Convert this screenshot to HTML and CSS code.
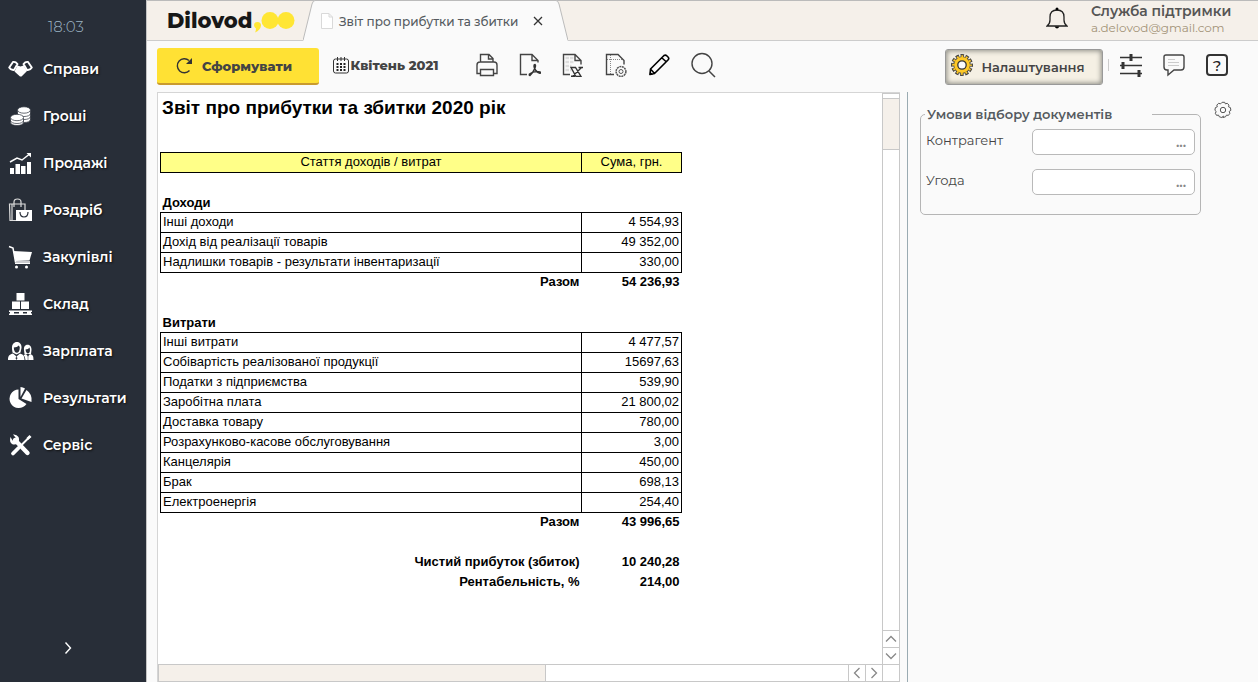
FILE: index.html
```html
<!DOCTYPE html>
<html lang="uk">
<head>
<meta charset="utf-8">
<title>Dilovod</title>
<link rel="stylesheet" href="styles.css">
</head>
<body>
<aside class="sidebar">
  <time class="clock">18:03</time>
  <nav class="menu">
    <a href="#"><svg width="26" height="24" viewBox="0 0 26 24"><path d="M1.200 10.500 5 5q2.500-.5 4.500 2L6 13Q3 13.500 1.200 10.500ZM23.800 10.500 20 5q-2.500-.5-4.500 2L19 13q3 .5 4.800-2.500Z" fill="none" stroke="#fff" stroke-width="1.900" stroke-linejoin="round"/><path d="M9.500 8.500 12.500 9.500 15.500 8.500 19 14 13.500 19.500 12 19.500 6.500 14.500Z" fill="#fff"/></svg>Справи</a>
    <a href="#"><svg width="26" height="24" viewBox="0 0 26 24"><g fill="#fff" stroke="#282e38" stroke-width=".7"><path d="M9.500 6v10c0 4 13 4 13 0V6"/><path d="M9.500 9.500c0 4 13 4 13 0M9.500 12.500c0 4 13 4 13 0M9.500 15.500c0 4 13 4 13 0" fill="none"/><ellipse cx="16" cy="6" rx="6.500" ry="3.200"/><path d="M2.500 14v4.500c0 4 13 4 13 0V14"/><path d="M2.500 16.500c0 4 13 4 13 0" fill="none"/><ellipse cx="9" cy="13.500" rx="6.500" ry="3.200"/></g></svg>Гроші</a>
    <a href="#"><svg width="26" height="24" viewBox="0 0 26 24"><path d="M2 17h4v6H2zM7.500 13h4.500v10H7.500zM13 15h4.500v8H13zM19 11h4v12h-4zM18.500 2H23v4.500z" fill="#fff"/><path d="M2 11 9 7l5 2 7-5.500" fill="none" stroke="#fff" stroke-width="1.500"/></svg>Продажі</a>
    <a href="#"><svg width="26" height="24" viewBox="0 0 26 24"><g fill="none" stroke="#ddd" stroke-width="1.200"><path d="M8 22.500H2L1.500 6h15.500v6M6 9V4q0-3 3.500-3T13 4v5M4 6v16"/></g><path d="M8 12h16v11H8z" fill="#fff"/><path d="M12 14q0 5 4 5t4-5" fill="none" stroke="#282e38" stroke-width="1.200"/></svg>Роздріб</a>
    <a href="#"><svg width="26" height="24" viewBox="0 0 26 24"><path d="M1 1.500 5 3 7.500 17H22" fill="none" stroke="#fff" stroke-width="1.500"/><path d="M5.500 6 24 7 21.500 15.500 7.500 16Z" fill="#fff"/><path d="M7 18.500h15" stroke="#fff"/><circle cx="8.500" cy="22" r="1.500" fill="#fff"/><circle cx="18.500" cy="22" r="1.500" fill="#fff"/></svg>Закупівлі</a>
    <a href="#"><svg width="26" height="24" viewBox="0 0 26 24"><path d="M8.500 1h8v7.500h-8zM4 9.500h8V17H4zM13 9.500h8V17h-8zM1 18.500h23V20H1zM1 21.500h23V23H1zM2 20h4v2H2zM11 20h4v2h-4zM19 20h4v2h-4z" fill="#fff"/></svg>Склад</a>
    <a href="#"><svg width="26" height="24" viewBox="0 0 26 24"><path d="M4 10c-1-9 10-9 9.500-1l-1 4.500-4 2-4-2Z" fill="#fff"/><path d="M5.800 8.500c2 0 4-1 5-2q1 1.500 1 2c0 7-6 7-6 0Z" fill="#282e38"/><path d="M0 21c0-5 2-5.500 5-6.500l3.500 3 3.500-3c3 1 4.500 2 4.500 6.500ZM16 11c-1-7 8-7 7.500 0l-.5 4h-6.500Z" fill="#fff"/><path d="M17.500 10.500q3 0 4-2c2 7-3.500 8-4 2Z" fill="#282e38"/><path d="M17.500 21q0-3-2-5l2.500-1 2 2.500 2-2.500c3 1 3.500 2 3.500 6Z" fill="#fff"/><path d="m8.500 17.500.6 2-.6 1-.6-1ZM20 17v4" stroke="#282e38" fill="#282e38" stroke-width=".5"/></svg>Зарплата</a>
    <a href="#"><svg width="26" height="24" viewBox="0 0 26 24"><path d="M10.500 3.500A9.300 9.300 0 1 0 18.500 18L10.500 13Z" fill="#fff"/><path d="M12.500 1q2.500 0 4.500 1.500L12.500 11Z" fill="#fff"/><path d="M18.500 4q6 4 5 12L13.500 12.500Z" fill="#fff"/></svg>Результати</a>
    <a href="#"><svg width="26" height="24" viewBox="0 0 26 24"><path d="M7 7 19.500 20" stroke="#fff" stroke-width="4.400" stroke-linecap="round"/><path d="M2.500 4q-1.500 5 1.500 7 3 1.500 5.500-1t1-6q-2-3-5.500-2.500l2.500 3-.5 2.500-2.500.5Z" fill="#fff"/><path d="M11 14.500 22 3.500" stroke="#fff" stroke-width="2"/><path d="m5 20.500 5.500-5.500" stroke="#fff" stroke-width="3.800" stroke-linecap="round"/><path d="m18.500 5 3-3L23.500 4 20 7Z" fill="#fff"/></svg>Сервіс</a>
  </nav>
  <button class="expand" aria-label="Розгорнути"><svg width="8" height="14" viewBox="0 0 8 14"><path d="m1.500 1.500 5 5.500-5 5.500" fill="none" stroke="#fff" stroke-width="1.400"/></svg></button>
</aside>
<main class="main">
  <header class="header">
    <a class="logo" href="#"><span>Dilovod</span><svg width="42" height="24" viewBox="0 0 42 24"><g fill="#ffe634"><circle cx="17" cy="11.500" r="8.500"/><circle cx="33" cy="11.500" r="8.500"/><path d="M1 16q0-3 3.500-3T8 16.500Q7.500 21 2 23.500q1-2 1-4-2-1-2-3.500Z"/></g></svg></a>
    <div class="tab">
      <svg class="slant" width="12" height="41" viewBox="0 0 12 41"><path d="M0 41V40.500L9 4Q10 .5 12 .5V41Z" fill="#fafafa"/><path d="M0 40.500 9 4Q10 .5 12 .5" fill="none" stroke="#bbb"/></svg>
      <div class="tab-body">
        <svg width="12" height="16" viewBox="0 0 12 16"><path d="M.5.500h7.500l3.500 3.500v11.500H.5ZM8 .5V4h3.500" fill="#fff" stroke="#d9d9d9"/></svg>
        <span>Звіт про прибутки та збитки</span>
        <button aria-label="Закрити"><svg width="10" height="10" viewBox="0 0 10 10"><path d="m1 1 8 8M9 1 1 9" stroke="#333" stroke-width="1.300"/></svg></button>
      </div>
      <svg class="slant" width="12" height="41" viewBox="0 0 12 41"><path d="M12 41V40.500L3 4Q2 .5 0 .5V41Z" fill="#fafafa"/><path d="M12 40.500 3 4Q2 .5 0 .5" fill="none" stroke="#bbb"/></svg>
    </div>
    <div class="account">
      <button aria-label="Сповіщення"><svg width="22" height="24" viewBox="0 0 22 24"><path d="M1 19q3-2 3-6v-3q0-7 7-7t7 7v3q0 4 3 6Z" fill="none" stroke="#222" stroke-width="1.300"/><circle cx="11" cy="2" r="1.500"/><path d="M8.500 19.500q2.500 4 5 0Z"/></svg></button>
      <div class="user"><strong>Служба підтримки</strong><a href="#">a.delovod@gmail.com</a></div>
    </div>
  </header>
  <div class="toolbar">
    <button class="generate"><svg width="18" height="18" viewBox="0 0 18 18"><path d="M14.500 13.500a7 7 0 1 1-.5-10" fill="none" stroke="#333" stroke-width="1.400"/><path d="M17 1v6h-6Z" fill="#333"/></svg>Сформувати</button>
    <button class="period"><svg width="16" height="17" viewBox="0 0 16 17"><rect x=".5" y="2" width="15" height="14" rx="2" fill="none" stroke="#333"/><path d="M4.500 0v4M8 0v4M11.500 0v4" stroke="#333"/><path d="M3.500 7h9M3.500 10h9M3.500 13h9" stroke="#222" stroke-width="1.800" stroke-dasharray="2 1.500"/></svg>Квітень 2021</button>
    <div class="tools">
      <button aria-label="Друк"><svg width="22" height="24" viewBox="0 0 22 24"><g fill="none" stroke="#444" stroke-width="1.400"><path d="M4.500 9V1.500H13L17 5.500V9M12.500 1.500V6H17M4.500 20.500H1V12q0-3 3-3h14q3 0 3 3v8.500h-3.500"/><path d="M4.500 16.500h13v6h-13Z"/></g></svg></button>
      <button aria-label="PDF"><svg width="22" height="24" viewBox="0 0 22 24"><path d="M8 21.500H1.500V1.500h11.500L19 7.500v2M13 1.500V7.500h6" fill="none" stroke="#444" stroke-width="1.400"/><path d="M15 13q0-1.500 1-1.500 1.200 1-.5 4.500-2 4.500-4.500 6.500-1.200 0-.5-1.500 3-2.500 7.500-2.500 4 0 3.500 1.500-2 1-5-3Q15 14.500 15 13Z" fill="none" stroke="#333" stroke-width="1.500"/></svg></button>
      <button aria-label="Excel"><svg width="22" height="24" viewBox="0 0 22 24"><path d="M3.500 5h8M3.500 9h8M3.500 13h6M3.500 17h6" stroke="#ddd" stroke-width="2.500" stroke-dasharray="3.500 1"/><path d="M8 21.500H1.500V1.500h11.500L19 7.500v4M13 1.500V7.500h6" fill="none" stroke="#444" stroke-width="1.400"/><path d="M9 14.500h4.500l5.500 9h-5ZM16.500 14.500H21M9 23.300h4M19.500 14.500l-9 9" fill="none" stroke="#333" stroke-width="1.400"/></svg></button>
      <button aria-label="Шаблон"><svg width="22" height="24" viewBox="0 0 22 24"><path d="M5.500 2v20M2 6.500h16" stroke="#888" stroke-dasharray="1 1"/><path d="M9 21.500H1.500V1.500h11.500L19 7.500v4" fill="none" stroke="#444" stroke-width="1.400"/><circle cx="16" cy="18.500" r="4.900" fill="#fafafa" stroke="#555" stroke-width="1.500" stroke-dasharray="2 .6"/><circle cx="16" cy="18.500" r="2" fill="none" stroke="#555"/></svg></button>
      <button aria-label="Редагувати"><svg width="22" height="24" viewBox="0 0 22 24"><path d="M2 21.500 2.500 16 16 2.500q1.500-1 3 .5l1 1q1.500 1.500 0 3L6.500 20.500ZM2.500 16l4 4.500M14 5l4.500 4" fill="none" stroke="#000" stroke-width="1.600" stroke-linejoin="round"/><path d="m1.500 22 .5-3.500 3 3Z"/></svg></button>
      <button aria-label="Пошук"><svg width="25" height="26" viewBox="0 0 25 26"><circle cx="11" cy="11.500" r="10" fill="none" stroke="#444" stroke-width="1.400"/><path d="m18 19 6 6" stroke="#444" stroke-width="1.500"/></svg></button>
    </div>
    <button class="settings"><svg width="22" height="22" viewBox="0 0 22 22"><circle cx="11" cy="11" r="8.700" fill="#444"/><g fill="none"><circle cx="11" cy="11" r="9.300" stroke="#444" stroke-width="3.400" stroke-dasharray="3.400 1.469" stroke-dashoffset="1.700"/><circle cx="11" cy="11" r="8.700" stroke="#ffc927" stroke-width="2.200" stroke-dasharray="1.800 2.755" stroke-dashoffset=".9"/></g><circle cx="11" cy="11" r="7.900" fill="#ffc927"/><circle cx="11" cy="11" r="4.200" fill="#fafafa" stroke="#333" stroke-width="1.300"/></svg>Налаштування</button>
    <div class="extras">
      <button aria-label="Параметри"><svg width="22" height="24" viewBox="0 0 22 24"><path d="M0 4.500h22M0 12.500h22M0 20.500h22" stroke="#333" stroke-width="1.400"/><path d="M11 1v7M3 9v7M19 17v7" stroke="#333" stroke-width="3"/></svg></button>
      <button aria-label="Коментарі"><svg width="22" height="24" viewBox="0 0 22 24"><path d="M3 2h16q2 0 2 2v10q0 3-3 3h-7l-6 5v-5H4q-3 0-3-3V4q0-2 2-2Z" fill="none" stroke="#444" stroke-width="1.400"/><path d="M5 6.500h7M5 9.500h11M5 12.500h11" stroke="#ccc"/></svg></button>
      <button class="help" aria-label="Довідка">?</button>
    </div>
  </div>
  <div class="workspace">
    <section class="viewer">
      <div class="report">
        <h1>Звіт про прибутки та збитки 2020 рік</h1>
        <table>
          <colgroup><col class="col-name"><col class="col-sum"></colgroup>
          <thead><tr><th>Стаття доходів / витрат</th><th>Сума, грн.</th></tr></thead>
          <tbody>
            <tr class="gap"><td colspan="2"></td></tr>
            <tr class="group"><th colspan="2">Доходи</th></tr>
            <tr><td>Інші доходи</td><td>4 554,93</td></tr>
            <tr><td>Дохід від реалізації товарів</td><td>49 352,00</td></tr>
            <tr><td>Надлишки товарів - результати інвентаризації</td><td>330,00</td></tr>
            <tr class="total"><th>Разом</th><td>54 236,93</td></tr>
            <tr class="gap"><td colspan="2"></td></tr>
            <tr class="group"><th colspan="2">Витрати</th></tr>
            <tr><td>Інші витрати</td><td>4 477,57</td></tr>
            <tr><td>Собівартість реалізованої продукції</td><td>15697,63</td></tr>
            <tr><td>Податки з підприємства</td><td>539,90</td></tr>
            <tr><td>Заробітна плата</td><td>21 800,02</td></tr>
            <tr><td>Доставка товару</td><td>780,00</td></tr>
            <tr><td>Розрахунково-касове обслуговування</td><td>3,00</td></tr>
            <tr><td>Канцелярія</td><td>450,00</td></tr>
            <tr><td>Брак</td><td>698,13</td></tr>
            <tr><td>Електроенергія</td><td>254,40</td></tr>
            <tr class="total"><th>Разом</th><td>43 996,65</td></tr>
            <tr class="gap"><td colspan="2"></td></tr>
            <tr class="total"><th>Чистий прибуток (збиток)</th><td>10 240,28</td></tr>
            <tr class="total"><th>Рентабельність, %</th><td>214,00</td></tr>
          </tbody>
        </table>
      </div>
      <div class="vbar">
        <span class="vthumb"></span><span class="track"></span>
        <button aria-label="Вгору"><svg width="12" height="8" viewBox="0 0 12 8"><path d="m1 6.500 5-5 5 5" fill="none" stroke="#888" stroke-width="1.300"/></svg></button>
        <button aria-label="Вниз"><svg width="12" height="8" viewBox="0 0 12 8"><path d="m1 1.500 5 5 5-5" fill="none" stroke="#888" stroke-width="1.300"/></svg></button>
      </div>
      <div class="hbar">
        <span class="hthumb"></span><span class="track"></span>
        <button aria-label="Ліворуч"><svg width="8" height="12" viewBox="0 0 8 12"><path d="M6.500 1 1.500 6l5 5" fill="none" stroke="#888" stroke-width="1.300"/></svg></button>
        <button aria-label="Праворуч"><svg width="8" height="12" viewBox="0 0 8 12"><path d="m1.500 1 5 5-5 5" fill="none" stroke="#888" stroke-width="1.300"/></svg></button>
      </div>
      <div class="corner"></div>
    </section>
    <aside class="filters">
      <fieldset>
        <legend>Умови відбору документів</legend>
        <div class="field"><label for="partner">Контрагент</label><div class="picker"><input id="partner" type="text"><button aria-label="Вибрати контрагента">...</button></div></div>
        <div class="field"><label for="deal">Угода</label><div class="picker"><input id="deal" type="text"><button aria-label="Вибрати угоду">...</button></div></div>
      </fieldset>
      <button class="gear" aria-label="Налаштувати умови"><svg width="18" height="18" viewBox="0 0 18 18"><path d="M7.700 1h2.600l.7 1.600 1.800-.6 1.800 1.800-.5 1.700 1.900.8.500 2.700-1.700 1.200.7 1.800-1.500 2.100-1.900-.3-1 1.700-2.600.7L9 14.800l-1.500 1.400-2.600-.7-.8-1.700-1.900.3L.9 12l.9-1.800L.5 9l.5-2.700 1.900-.8L2.400 3.800 4.200 2l1.900.6Z" transform="translate(.4 .3)" fill="none" stroke="#555" stroke-linejoin="round"/><circle cx="9" cy="9" r="2.700" fill="none" stroke="#555"/></svg></button>
    </aside>
  </div>
</main>
</body>
</html>
```
FILE: styles.css
```css
* { box-sizing: border-box; }
body {
  margin: 0;
  height: 100vh;
  display: flex;
  overflow: hidden;
  background: #fafafa;
  color: #444;
  font-family: Montserrat, Inter, "Noto Sans", sans-serif;
  font-size: 14px;
}
button {
  display: flex;
  align-items: center;
  justify-content: center;
  margin: 0;
  padding: 0;
  border: 0;
  background: none;
  color: inherit;
  font: inherit;
}
svg { display: block; flex: none; }
a { color: inherit; text-decoration: none; }

.sidebar {
  flex: none;
  width: 147px;
  display: flex;
  flex-direction: column;
  background: #282e38;
  border-right: 1px solid #c4c4c4;
  color: #fff;
}
.clock {
  padding: 16px 14px 0 0;
  height: 45px;
  line-height: 22px;
  text-align: center;
  font-size: 15px;
  font-weight: 300;
  color: #9db4c4;
}
.menu { display: flex; flex-direction: column; }
.menu a {
  display: flex;
  align-items: center;
  gap: 9px;
  height: 47px;
  padding-left: 8px;
  font-size: 14px;
  font-weight: 600;
  text-shadow: 1px 1px 2px #111;
}
.expand { margin-top: auto; margin-bottom: 26px; padding-right: 11px; height: 16px; }

.main { flex: 1; min-width: 0; display: flex; flex-direction: column; }
.header {
  flex: none;
  display: flex;
  height: 41px;
  background: linear-gradient(#bbb 0 1px, #f5f0ea 1px 40px, #ccc 40px);
}
.logo { display: flex; align-items: center; gap: 1px; width: 156px; padding-left: 20px; }
.logo span { width: 85px; font-size: 21px; font-weight: 800; color: #171717; }
.tab { display: flex; }
.tab-body {
  display: flex;
  align-items: center;
  gap: 6px;
  width: 241px;
  padding: 0 13px 0 6px;
  border-top: 1px solid #bbb;
  background: #fafafa;
  font-size: 12px;
  font-weight: 500;
  color: #555a60;
  white-space: nowrap;
}
.tab-body button { margin-left: auto; }
.account { display: flex; align-items: center; gap: 23px; margin-left: auto; padding-right: 27px; padding-bottom: 3px; }
.user { display: flex; flex-direction: column; width: 140px; white-space: nowrap; }
.user strong { font-size: 14px; line-height: 17px; font-weight: 600; color: #555; }
.user a { font-size: 12px; line-height: 16px; color: #a39378; }

.toolbar { flex: none; display: flex; align-items: center; height: 51px; padding: 0 30px 0 10px; }
.generate {
  gap: 9px;
  width: 162px;
  height: 37px;
  padding-right: 9px;
  border-bottom: 2px solid #c99a2e;
  border-radius: 3px;
  background: #ffe134;
  font-size: 13px;
  font-weight: 800;
}
.period { gap: 2px; width: 107px; margin: 0 37px 3px 13px; font-size: 13px; font-weight: 800; white-space: nowrap; }
.tools { display: flex; gap: 21px; margin-bottom: 3px; }
.settings {
  gap: 8px;
  width: 158px;
  height: 36px;
  margin: 1px 5px 0 auto;
  padding: 0 12px 0 0;
  border: 1px solid #999;
  border-radius: 3px;
  background: #f5f0e4;
  box-shadow: inset 0 0 5px 1px #8d8d86;
  font-size: 13px;
  font-weight: 600;
}
.settings svg { margin-bottom: 4px; }
.extras { display: flex; align-items: center; gap: 21px; margin-bottom: 3px; }
.extras::before { content: ""; width: 1px; height: 12px; margin-right: -10px; background: #ccc; }
.help { width: 22px; height: 22px; border: 2px solid #333; border-radius: 4px; font-size: 15px; font-weight: 500; color: #222; }

.workspace { flex: 1; min-height: 0; display: flex; padding-left: 10px; }
.viewer {
  flex: 1;
  min-width: 0;
  display: grid;
  grid-template: minmax(0, 1fr) 18px / minmax(0, 1fr) 18px;
  border-top: 1px solid #d5d5d5;
  border-left: 1px solid #d5d5d5;
  background: #fff;
}
.report {
  overflow: hidden;
  padding-left: 2px;
  color: #000;
  font-family: "Liberation Sans", Arial, sans-serif;
  font-size: 13px;
}
.report h1 { margin: 0; padding: 4px 0 0 2px; height: 59px; font-size: 19px; line-height: 22px; }
.report table { width: 522px; border-collapse: collapse; table-layout: fixed; }
.col-name { width: 421px; }
.report th, .report td { height: 20px; padding: 0 2px 2px; line-height: 17px; border: 1px solid #000; text-align: left; white-space: nowrap; }
.report td + td, .report th + td { text-align: right; }
.report thead th { background: #ffff88; font-weight: 400; text-align: center; }
.report .gap td { border-width: 0; }
.report .group th { padding-bottom: 0; border-width: 0 0 1px; }
.report .total th, .report .total td { border-width: 0; font-weight: 700; text-align: right; }
.vbar { display: flex; flex-direction: column; border: solid #c8c8c8; border-width: 1px 1px 0; }
.vthumb { height: 52px; margin-top: 4px; border: solid #c8c8c8; border-width: 1px 0; background: #f5f0ea; }
.track { flex: 1; }
.vbar button { height: 17px; border-top: 1px solid #c8c8c8; }
.hbar { display: flex; border: solid #c8c8c8; border-width: 1px 0 1px 1px; }
.hthumb { width: 53.5%; border-right: 1px solid #c8c8c8; background: #f5f0ea; }
.hbar button { width: 17px; border-left: 1px solid #c8c8c8; }
.corner { border: 1px solid #c8c8c8; }

.filters {
  flex: none;
  display: flex;
  align-items: flex-start;
  gap: 13px;
  width: 351px;
  margin-left: 7px;
  padding: 13px 0 0 12px;
  border-left: 1px solid #9aabb2;
}
.filters fieldset { width: 281px; height: 110px; margin: 0; padding: 5px 5px 0; border: 1px solid #b5b5b5; border-radius: 5px; }
.filters legend { width: 227px; margin-left: -1px; padding: 0 2px; line-height: 18px; font-size: 13px; font-weight: 600; color: #555a60; }
.field { display: flex; justify-content: space-between; height: 40px; }
.field label { line-height: 24px; font-size: 13px; }
.picker { display: flex; width: 163px; height: 26px; margin-top: 1px; border: 1px solid #b9b9b9; border-radius: 5px; background: #fff; }
.picker input { flex: 1; min-width: 0; padding: 0 6px; border: 0; background: none; outline: 0; font: inherit; }
.picker button { width: 26px; font-weight: 600; color: #888; }
.gear { margin-top: -4px; }
```
